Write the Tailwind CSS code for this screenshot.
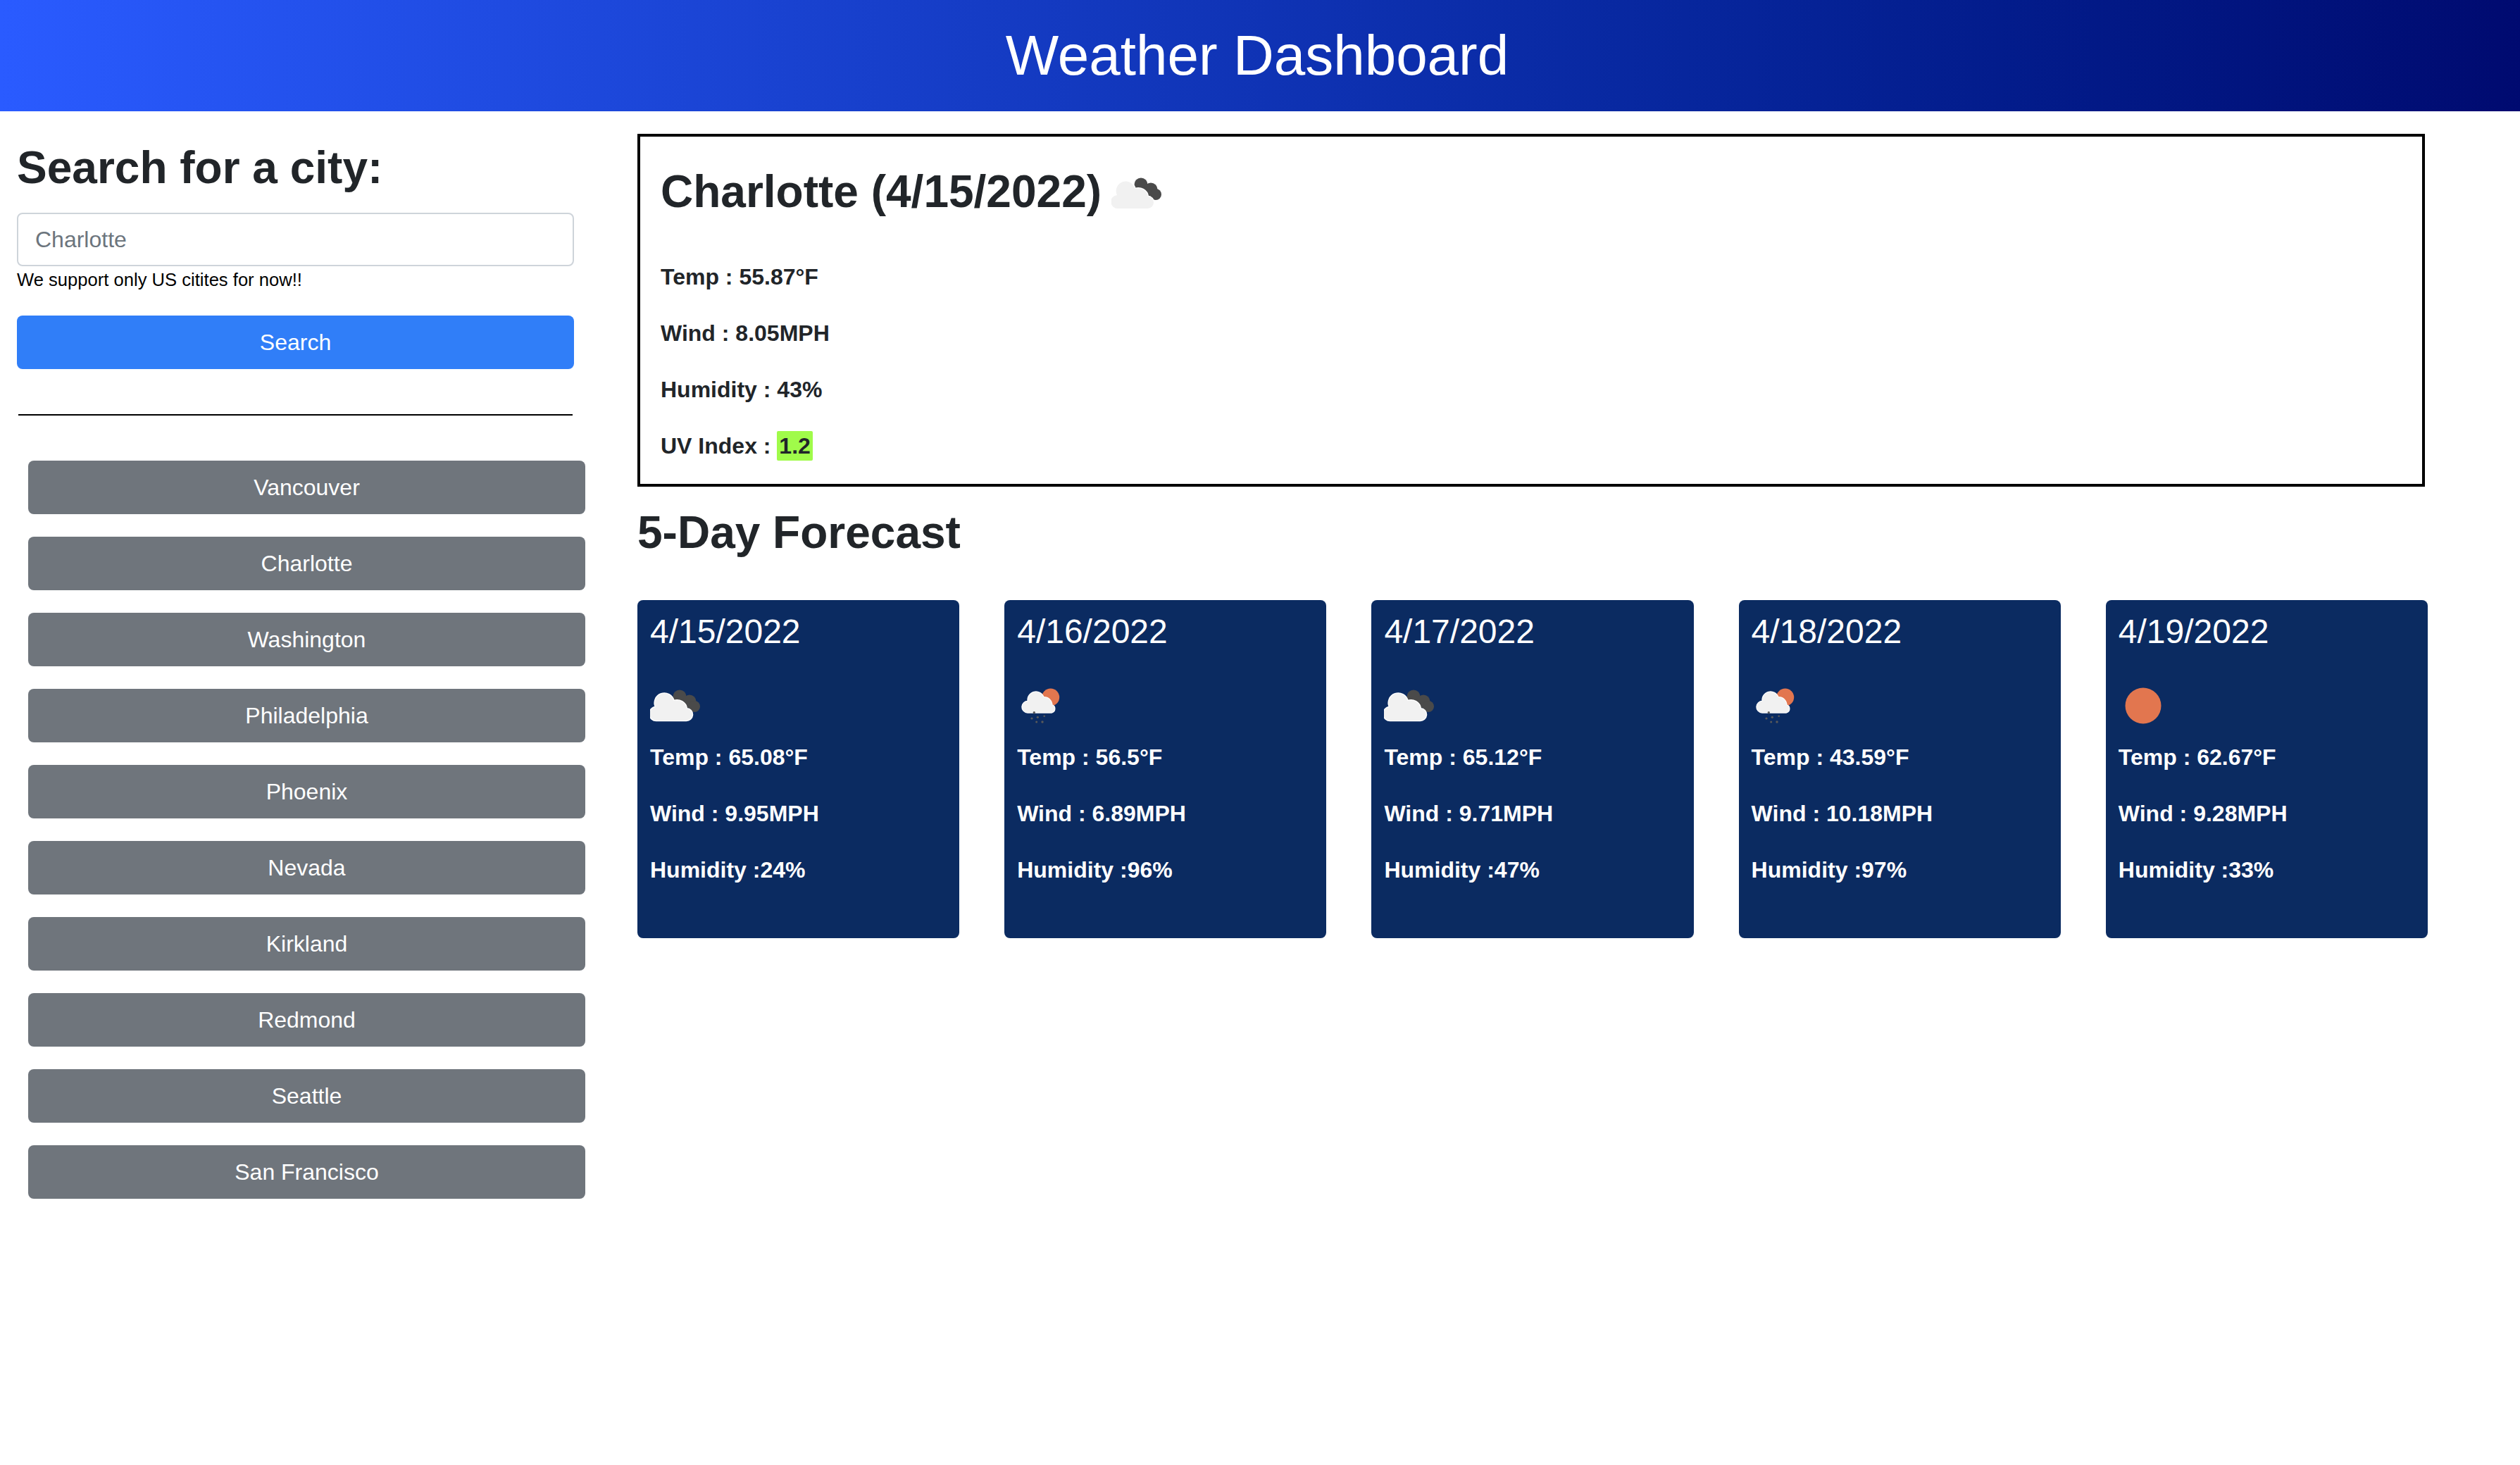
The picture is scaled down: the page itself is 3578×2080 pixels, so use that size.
<!DOCTYPE html>
<html lang="en">
<head>
    <meta charset="UTF-8">
    <meta name="viewport" content="width=device-width, initial-scale=1.0">
    <title>Weather Dashboard</title>
    <script src="https://cdn.jsdelivr.net/npm/@tailwindcss/browser@4"></script>
</head>
<body class="bg-white font-['Liberation_Sans',Arial,sans-serif] text-[#212529]">
    <!-- Header -->
    <header class="h-[158px] flex items-center justify-center pr-[8px] bg-linear-to-r from-[#2a5bff] to-[#000a70]">
        <h1 class="text-[80px] leading-[96px] text-white">Weather Dashboard</h1>
    </header>

    <div class="flex">
        <!-- Search column -->
        <aside class="w-[905px] shrink-0 pt-[42px] pl-[24px]">
            <h2 class="text-[64px] leading-[77px] font-bold mb-[25px]">Search for a city:</h2>
            <div class="w-[791px]">
                <input type="text" placeholder="Charlotte" class="block w-full h-[76px] px-[24px] text-[32px] border-2 border-[#ced4da] rounded-lg placeholder:text-[#6c757d]">
                <p class="text-[25.6px] leading-[36px] text-black mt-[1px] mb-[33px]">We support only US citites for now!!</p>
                <button class="block w-full h-[76px] bg-[#307ef8] text-white text-[32px] rounded-lg">Search</button>
                <hr class="mx-[2px] mt-[64px] border-t-2 border-black">
            </div>
            <div class="ml-[16px] w-[791px] mt-[64px] flex flex-col gap-[32px]">
                <button class="h-[76px] bg-[#6f757c] text-white text-[32px] rounded-lg">Vancouver</button>
                <button class="h-[76px] bg-[#6f757c] text-white text-[32px] rounded-lg">Charlotte</button>
                <button class="h-[76px] bg-[#6f757c] text-white text-[32px] rounded-lg">Washington</button>
                <button class="h-[76px] bg-[#6f757c] text-white text-[32px] rounded-lg">Philadelphia</button>
                <button class="h-[76px] bg-[#6f757c] text-white text-[32px] rounded-lg">Phoenix</button>
                <button class="h-[76px] bg-[#6f757c] text-white text-[32px] rounded-lg">Nevada</button>
                <button class="h-[76px] bg-[#6f757c] text-white text-[32px] rounded-lg">Kirkland</button>
                <button class="h-[76px] bg-[#6f757c] text-white text-[32px] rounded-lg">Redmond</button>
                <button class="h-[76px] bg-[#6f757c] text-white text-[32px] rounded-lg">Seattle</button>
                <button class="h-[76px] bg-[#6f757c] text-white text-[32px] rounded-lg">San Francisco</button>
            </div>
        </aside>

        <!-- Results -->
        <main class="w-[2542px] pt-[32px]">
            <section class="w-[2538px] border-4 border-black pt-[40px] px-[29px] h-[501px]">
                <div class="flex items-start mb-[58px]">
                    <h2 class="text-[64px] leading-[77px] font-bold">Charlotte (4/15/2022)</h2>
                    <svg class="ml-[14px] mt-[9px] w-[100px] h-[65px] blur-[0.5px]" viewBox="0 0 100 65">
                        <g fill="#4a4a4a"><circle cx="42" cy="19" r="9.500"/><circle cx="56" cy="26" r="9.500"/><circle cx="63" cy="33" r="8"/></g>
                        <path fill="#f1f1f1" stroke="#fff" stroke-width="2.500" paint-order="stroke" d="M9.500 53A9.500 9.500 0 0 1 8 34A13.600 13.600 0 1 1 33.500 25A14 14 0 0 1 52 36A8.500 8.500 0 0 1 51 53Z"/>
                    </svg>
                </div>
                <p class="text-[32px] leading-[48px] font-bold mb-[32px]">Temp : 55.87°F</p>
                <p class="text-[32px] leading-[48px] font-bold mb-[32px]">Wind : 8.05MPH</p>
                <p class="text-[32px] leading-[48px] font-bold mb-[32px]">Humidity : 43%</p>
                <p class="text-[32px] leading-[48px] font-bold">UV Index : <span class="inline-block leading-[42px] px-[3px] rounded-[2px] bg-[#a0fb4a]">1.2</span></p>
            </section>

            <h2 class="text-[64px] leading-[77px] font-bold mt-[27px] mb-[57px]">5-Day Forecast</h2>

            <div class="grid grid-cols-5 gap-[64px]">
                <div class="h-[480px] pt-[16px] px-[18px] rounded-lg bg-[#0b2b61] text-white">
                    <h4 class="text-[48px] leading-[58px]">4/15/2022</h4>
                    <svg class="mt-[44px] mb-[16px] w-[100px] h-[65px] blur-[0.5px]" viewBox="0 0 100 65">
                        <g fill="#4a4a4a"><circle cx="42" cy="19" r="9.500"/><circle cx="56" cy="26" r="9.500"/><circle cx="63" cy="33" r="8"/></g>
                        <path fill="#f1f1f1" stroke="#fff" stroke-width="2.500" paint-order="stroke" d="M9.500 53A9.500 9.500 0 0 1 8 34A13.600 13.600 0 1 1 33.500 25A14 14 0 0 1 52 36A8.500 8.500 0 0 1 51 53Z"/>
                    </svg>
                    <p class="text-[32px] leading-[48px] font-bold mb-[32px]">Temp : 65.08°F</p>
                    <p class="text-[32px] leading-[48px] font-bold mb-[32px]">Wind : 9.95MPH</p>
                    <p class="text-[32px] leading-[48px] font-bold">Humidity :24%</p>
                </div>
                <div class="h-[480px] pt-[16px] px-[18px] rounded-lg bg-[#0b2b61] text-white">
                    <h4 class="text-[48px] leading-[58px]">4/16/2022</h4>
                    <svg class="mt-[44px] mb-[16px] w-[100px] h-[65px] blur-[0.5px]" viewBox="0 0 100 65">
                        <circle cx="47.700" cy="20" r="12.500" fill="#e2764f"/>
                        <path fill="#f1f1f1" stroke="#fff" stroke-width="2" paint-order="stroke" d="M15 41.700A8 8 0 0 1 15.500 25.700A11.500 11.500 0 0 1 37.700 20A11 11 0 0 1 49.500 31A5.500 5.500 0 0 1 49 41.700Z"/>
                        <g fill="#5a5a5a"><circle cx="24.300" cy="41.700" r="1.700"/><circle cx="21" cy="50" r="1.600"/><circle cx="29.300" cy="48.300" r="1.600"/><circle cx="38.700" cy="46.700" r="1.300"/><circle cx="27.700" cy="55" r="1.500"/><circle cx="36" cy="55" r="1.700"/></g>
                    </svg>
                    <p class="text-[32px] leading-[48px] font-bold mb-[32px]">Temp : 56.5°F</p>
                    <p class="text-[32px] leading-[48px] font-bold mb-[32px]">Wind : 6.89MPH</p>
                    <p class="text-[32px] leading-[48px] font-bold">Humidity :96%</p>
                </div>
                <div class="h-[480px] pt-[16px] px-[18px] rounded-lg bg-[#0b2b61] text-white">
                    <h4 class="text-[48px] leading-[58px]">4/17/2022</h4>
                    <svg class="mt-[44px] mb-[16px] w-[100px] h-[65px] blur-[0.5px]" viewBox="0 0 100 65">
                        <g fill="#4a4a4a"><circle cx="42" cy="19" r="9.500"/><circle cx="56" cy="26" r="9.500"/><circle cx="63" cy="33" r="8"/></g>
                        <path fill="#f1f1f1" stroke="#fff" stroke-width="2.500" paint-order="stroke" d="M9.500 53A9.500 9.500 0 0 1 8 34A13.600 13.600 0 1 1 33.500 25A14 14 0 0 1 52 36A8.500 8.500 0 0 1 51 53Z"/>
                    </svg>
                    <p class="text-[32px] leading-[48px] font-bold mb-[32px]">Temp : 65.12°F</p>
                    <p class="text-[32px] leading-[48px] font-bold mb-[32px]">Wind : 9.71MPH</p>
                    <p class="text-[32px] leading-[48px] font-bold">Humidity :47%</p>
                </div>
                <div class="h-[480px] pt-[16px] px-[18px] rounded-lg bg-[#0b2b61] text-white">
                    <h4 class="text-[48px] leading-[58px]">4/18/2022</h4>
                    <svg class="mt-[44px] mb-[16px] w-[100px] h-[65px] blur-[0.5px]" viewBox="0 0 100 65">
                        <circle cx="47.700" cy="20" r="12.500" fill="#e2764f"/>
                        <path fill="#f1f1f1" stroke="#fff" stroke-width="2" paint-order="stroke" d="M15 41.700A8 8 0 0 1 15.500 25.700A11.500 11.500 0 0 1 37.700 20A11 11 0 0 1 49.500 31A5.500 5.500 0 0 1 49 41.700Z"/>
                        <g fill="#5a5a5a"><circle cx="24.300" cy="41.700" r="1.700"/><circle cx="21" cy="50" r="1.600"/><circle cx="29.300" cy="48.300" r="1.600"/><circle cx="38.700" cy="46.700" r="1.300"/><circle cx="27.700" cy="55" r="1.500"/><circle cx="36" cy="55" r="1.700"/></g>
                    </svg>
                    <p class="text-[32px] leading-[48px] font-bold mb-[32px]">Temp : 43.59°F</p>
                    <p class="text-[32px] leading-[48px] font-bold mb-[32px]">Wind : 10.18MPH</p>
                    <p class="text-[32px] leading-[48px] font-bold">Humidity :97%</p>
                </div>
                <div class="h-[480px] pt-[16px] px-[18px] rounded-lg bg-[#0b2b61] text-white">
                    <h4 class="text-[48px] leading-[58px]">4/19/2022</h4>
                    <svg class="mt-[44px] mb-[16px] w-[100px] h-[65px] blur-[0.5px]" viewBox="0 0 100 65">
                        <circle cx="35" cy="32" r="25.500" fill="#e2764f"/>
                    </svg>
                    <p class="text-[32px] leading-[48px] font-bold mb-[32px]">Temp : 62.67°F</p>
                    <p class="text-[32px] leading-[48px] font-bold mb-[32px]">Wind : 9.28MPH</p>
                    <p class="text-[32px] leading-[48px] font-bold">Humidity :33%</p>
                </div>
            </div>
        </main>
    </div>
</body>
</html>
